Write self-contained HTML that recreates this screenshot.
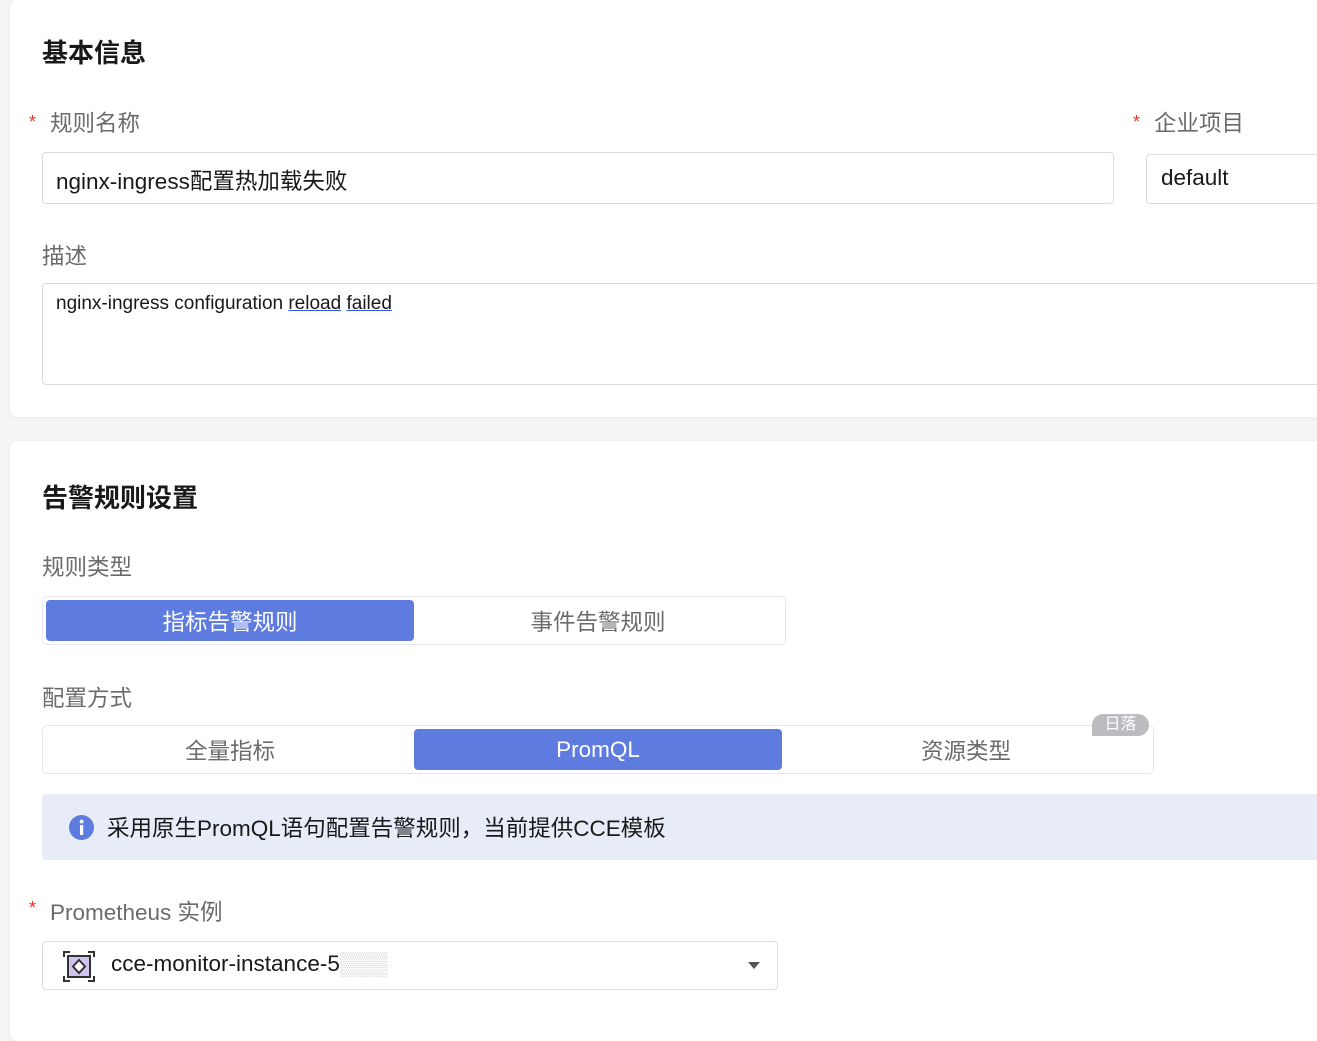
<!DOCTYPE html>
<html><head><meta charset="utf-8"><style>
*{box-sizing:border-box;margin:0;padding:0}
body{width:1317px;height:1001px;overflow:hidden;background:#f5f5f7;font-family:"Liberation Sans","Noto Sans CJK SC",sans-serif;position:relative}
.card{position:absolute;left:10px;right:0;background:#fff;border-radius:8px 0 0 8px;box-shadow:0 1px 4px rgba(0,0,0,.06)}
.abs{position:absolute}
.h{font-size:26px;font-weight:bold;color:#191919}
.lab{font-size:22.5px;color:#6b6b6b}
.star{color:#e5322d;font-size:18px}
.inp{position:absolute;border:1px solid #dcdcdc;border-radius:4px;background:#fff;font-size:22.5px;color:#191919}
.seg{position:absolute;border:1px solid #e8e8ec;border-radius:5px;background:#fff}
.si{position:absolute;top:3px;height:41px;display:flex;align-items:center;justify-content:center;font-size:22.5px;color:#6b6b6b;border-radius:4px}
.on{background:#5e7ce0;color:#fff}
</style></head><body>
<div class="card" style="top:0;height:417px">
<div class="abs h" style="left:32px;top:33px">基本信息</div>
<div class="abs star" style="left:19px;top:112px">*</div>
<div class="abs lab" style="left:40px;top:106px">规则名称</div>
<div class="abs star" style="left:1123px;top:112px">*</div>
<div class="abs lab" style="left:1144px;top:106px">企业项目</div>
<div class="inp" style="left:32px;top:152px;width:1072px;height:52px;padding:11px 13px">nginx-ingress配置热加载失败</div>
<div class="inp" style="left:1136px;top:154px;width:200px;height:50px;padding:10px 14px">default</div>
<div class="abs lab" style="left:32px;top:239px">描述</div>
<div class="inp" style="left:32px;top:283px;width:1300px;height:102px;padding:9px 13px;font-size:19px">nginx-ingress configuration <span style="text-decoration:underline;text-decoration-color:#3355ee">reload</span> <span style="text-decoration:underline;text-decoration-color:#3355ee">failed</span></div>
</div>
<div class="card" style="top:441px;height:600px">
<div class="abs h" style="left:32px;top:37px">告警规则设置</div>
<div class="abs lab" style="left:32px;top:109px">规则类型</div>
<div class="seg" style="left:32px;top:155px;width:744px;height:49px">
<div class="si on" style="left:3px;width:368px">指标告警规则</div>
<div class="si" style="left:371px;width:368px">事件告警规则</div></div>
<div class="abs lab" style="left:32px;top:240px">配置方式</div>
<div class="seg" style="left:32px;top:284px;width:1112px;height:49px">
<div class="si" style="left:3px;width:368px">全量指标</div>
<div class="si on" style="left:371px;width:368px">PromQL</div>
<div class="si" style="left:739px;width:368px">资源类型</div></div>
<div class="abs" style="left:1082px;top:273px;width:57px;height:22px;background:#bcbcc0;border-radius:11px 11px 11px 0;color:#fff;font-size:16px;text-align:center;line-height:22px">日落</div>
<div class="abs" style="left:32px;top:353px;width:1300px;height:66px;background:#e8ecf8;border-radius:4px"></div>
<svg class="abs" style="left:59px;top:374px" width="25" height="25"><circle cx="12.5" cy="12.5" r="12.5" fill="#5e7ce0"/><rect x="11" y="10" width="3.2" height="10" fill="#fff"/><circle cx="12.6" cy="6.5" r="1.9" fill="#fff"/></svg>
<div class="abs" style="left:97px;top:370px;font-size:22.5px;color:#191919">采用原生PromQL语句配置告警规则，当前提供CCE模板</div>
<div class="abs star" style="left:19px;top:457px">*</div>
<div class="abs lab" style="left:40px;top:454px">Prometheus 实例</div>
<div class="inp" style="left:32px;top:500px;width:736px;height:49px"></div>
<svg class="abs" style="left:53px;top:510px" width="32" height="31"><path d="M1 6V1h6M25 1h6v5M31 25v5h-6M7 30H1v-5" stroke="#333" stroke-width="2" fill="none"/><rect x="5" y="5" width="22" height="21" fill="#d3c2f0" stroke="#333" stroke-width="2"/><path d="M16 9l6 6.5-6 6.5-6-6.5z" fill="#fff" stroke="#333" stroke-width="2"/></svg>
<div class="abs" style="left:101px;top:510px;font-size:22.5px;color:#191919">cce-monitor-instance-5<span style="color:#ccc">▒▒▒</span></div>
<svg class="abs" style="left:738px;top:521px" width="12" height="7"><path d="M0 0h12L6 7z" fill="#555"/></svg>
</div>
</body></html>
